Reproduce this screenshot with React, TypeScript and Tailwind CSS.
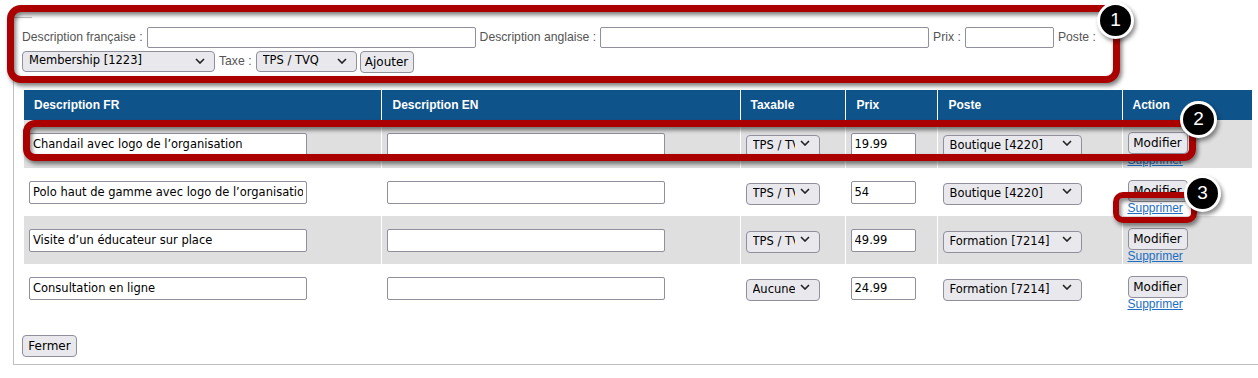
import React from 'react';

const rows = [
  { fr: 'Chandail avec logo de l’organisation', tax: 'TPS / TVQ', prix: '19.99', poste: 'Boutique [4220]' },
  { fr: 'Polo haut de gamme avec logo de l’organisation', tax: 'TPS / TVQ', prix: '54', poste: 'Boutique [4220]' },
  { fr: 'Visite d’un éducateur sur place', tax: 'TPS / TVQ', prix: '49.99', poste: 'Formation [7214]' },
  { fr: 'Consultation en ligne', tax: 'Aucune taxe', prix: '24.99', poste: 'Formation [7214]' },
];

const control = "font-['DejaVu_Sans',Tahoma,sans-serif] text-[11.5px] text-black";

const Chevron = () => (
  <svg className="pointer-events-none absolute right-[10px] top-1/2 -translate-y-1/2" width="10" height="6" viewBox="0 0 10 6">
    <path d="M1 1l4 4 4-4" fill="none" stroke="#222" strokeWidth="1.6" />
  </svg>
);

const Select: React.FC<{ value: string; options: string[]; className: string }> = ({ value, options, className }) => (
  <div className={`relative ${className}`}>
    <select
      defaultValue={value}
      className={`${control} h-full w-full appearance-none rounded-[4px] border border-[#8f8f9d] bg-[#e9e9ed] pl-[6px] pr-[24px] outline-none`}
    >
      {options.map((o) => (
        <option key={o}>{o}</option>
      ))}
    </select>
    <Chevron />
  </div>
);

const Badge: React.FC<{ n: number; className: string }> = ({ n, className }) => (
  <div
    className={`absolute flex h-[37px] w-[37px] items-center justify-center rounded-full border-[3px] border-white bg-black text-[19px] text-white shadow-[2px_3px_4px_rgba(0,0,0,0.45)] ${className}`}
  >
    {n}
  </div>
);

export default function App() {
  return (
    <div className="relative h-[378px] w-[1258px] overflow-hidden bg-white font-['Liberation_Sans',Arial,sans-serif]">
      <div className="ml-[13px] mt-[17px] border-b border-l border-[#c0c0c0] pb-[7px] pl-2">
        <div className="-ml-2 h-px w-[18px] bg-[#c0c0c0]" />

        {/* Add form */}
        <div className="mt-[9px] flex h-[21px] items-center gap-1 whitespace-nowrap text-[12.2px] text-[#555]">
          <span>Description française :</span>
          <input className={`${control} h-[21px] w-[329px] rounded-[2px] border border-[#8f8f9d] px-1`} />
          <span>Description anglaise :</span>
          <input className={`${control} h-[21px] w-[329px] rounded-[2px] border border-[#8f8f9d] px-1`} />
          <span>Prix :</span>
          <input className={`${control} h-[21px] w-[89px] rounded-[2px] border border-[#8f8f9d] px-1`} />
          <span>Poste :</span>
        </div>
        <div className="mt-[2px] flex h-[22px] items-center gap-1 whitespace-nowrap text-[12.2px] text-[#555]">
          <Select value="Membership [1223]" options={['Membership [1223]', 'Boutique [4220]', 'Formation [7214]']} className="h-[21px] w-[193px]" />
          <span>Taxe :</span>
          <Select value="TPS / TVQ" options={['TPS / TVQ', 'Aucune taxe']} className="h-[21px] w-[101px]" />
          <button className={`${control} ml-[-1px] mt-[2px] h-[22px] w-[54px] rounded-[4px] border border-[#8f8f9d] bg-[#e9e9ed] text-[12px]`}>
            Ajouter
          </button>
        </div>

        {/* Items table */}
        <table className="ml-[2px] mt-[18px] table-fixed border-collapse">
          <colgroup>
            <col className="w-[357px]" />
            <col className="w-[359px]" />
            <col className="w-[105px]" />
            <col className="w-[92px]" />
            <col className="w-[185px]" />
            <col className="w-[130px]" />
          </colgroup>
          <thead>
            <tr className="h-[30px] bg-[#0f538b] text-left text-[12px] font-bold text-white">
              <th className="pl-[10px] align-middle">Description FR</th>
              <th className="border-l border-white pl-[11px] align-middle">Description EN</th>
              <th className="border-l border-white pl-[10px] align-middle">Taxable</th>
              <th className="border-l border-white pl-[11px] align-middle">Prix</th>
              <th className="border-l border-white pl-[11px] align-middle">Poste</th>
              <th className="border-l border-white pl-[10px] align-middle">Action</th>
            </tr>
          </thead>
          <tbody>
            {rows.map((r, i) => (
              <tr key={r.fr} className={`h-[48px] ${i % 2 === 0 ? 'bg-[#dfdfdf]' : 'bg-white'}`}>
                <td className="pl-[5px] pt-[11px] align-top">
                  <input
                    defaultValue={r.fr}
                    className={`${control} h-[23px] w-[278px] rounded-[2px] border border-[#8f8f9d] bg-white px-[3px]`}
                  />
                </td>
                <td className="border-l border-white pl-[5px] pt-[11px] align-top">
                  <input className={`${control} h-[23px] w-[278px] rounded-[2px] border border-[#8f8f9d] bg-white px-[3px]`} />
                </td>
                <td className="border-l border-white pl-[5px] pt-[12px] align-top">
                  <Select value={r.tax} options={['TPS / TVQ', 'Aucune taxe']} className="h-[22px] w-[74px]" />
                </td>
                <td className="border-l border-white pl-[5px] pt-[11px] align-top">
                  <input
                    defaultValue={r.prix}
                    className={`${control} h-[23px] w-[65px] rounded-[2px] border border-[#8f8f9d] bg-white px-[3px]`}
                  />
                </td>
                <td className="border-l border-white pl-[5px] pt-[12px] align-top">
                  <Select value={r.poste} options={['Boutique [4220]', 'Formation [7214]', 'Membership [1223]']} className="h-[22px] w-[139px]" />
                </td>
                <td className="border-l border-white pl-[5px] pt-[12px] align-top">
                  <button className={`${control} block h-[22px] w-[60px] rounded-[4px] border border-[#8f8f9d] bg-[#e9e9ed] text-[12px]`}>
                    Modifier
                  </button>
                  <a href="#" className="block text-[12px] leading-[13px] text-[#1c6ec4] underline">
                    Supprimer
                  </a>
                </td>
              </tr>
            ))}
          </tbody>
        </table>

        <button className={`${control} mt-[23px] block h-[22px] w-[55px] rounded-[4px] border border-[#8f8f9d] bg-[#e9e9ed] text-[12px]`}>
          Fermer
        </button>
      </div>

      {/* Annotations */}
      <div className="pointer-events-none absolute left-[7px] top-[5px] h-[78px] w-[1113px] rounded-[14px] border-[7px] border-[#aa0000] drop-shadow-[2px_3px_2px_rgba(0,0,0,0.5)]" />
      <Badge n={1} className="left-[1097px] top-[2px]" />
      <div className="pointer-events-none absolute left-[23px] top-[120px] h-[41px] w-[1173px] rounded-[12px] border-[7px] border-[#aa0000] drop-shadow-[2px_3px_2px_rgba(0,0,0,0.5)]" />
      <Badge n={2} className="left-[1180px] top-[101px]" />
      <div className="pointer-events-none absolute left-[1113px] top-[192px] h-[31px] w-[84px] rounded-[10px] border-[6px] border-[#aa0000] drop-shadow-[2px_3px_2px_rgba(0,0,0,0.5)]" />
      <Badge n={3} className="left-[1184px] top-[175px]" />
    </div>
  );
}
